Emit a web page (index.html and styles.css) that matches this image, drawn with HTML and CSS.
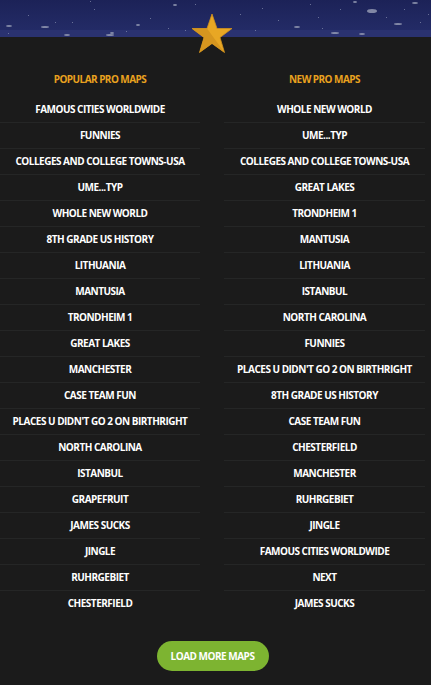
FILE: index.html
```html
<!DOCTYPE html>
<html lang="en">
<head>
    <meta charset="UTF-8">
    <meta name="viewport" content="width=device-width, initial-scale=1.0">
    <title>Pro Maps</title>
    <link rel="stylesheet" href="styles.css">
</head>
<body>
    <div class="page">
        <div class="banner">
            <svg class="sky" width="431" height="37" viewBox="0 0 431 37">
                <defs>
                    <linearGradient id="skyfill" x1="0" y1="0" x2="0" y2="1">
                        <stop offset="0" stop-color="#1c2257"/>
                        <stop offset="0.8" stop-color="#232b66"/>
                    </linearGradient>
                </defs>
                <rect width="431" height="37" fill="url(#skyfill)"/>
                <rect y="30" width="431" height="7" fill="#2a3270"/>
                <g fill="#9aa0b8" opacity="0.8">
                    <ellipse cx="9" cy="26" rx="3" ry="1"/>
                    <ellipse cx="45" cy="27" rx="4" ry="1"/>
                    <ellipse cx="67" cy="35" rx="3" ry="1"/>
                    <ellipse cx="110" cy="35" rx="4" ry="1"/>
                    <ellipse cx="112" cy="33" rx="2" ry="1"/>
                    <ellipse cx="138" cy="25" rx="2" ry="1"/>
                    <ellipse cx="175" cy="5" rx="2" ry="1"/>
                    <ellipse cx="297" cy="27" rx="3" ry="1"/>
                    <ellipse cx="335" cy="33" rx="4" ry="1"/>
                    <ellipse cx="372" cy="11" rx="5" ry="2"/>
                    <ellipse cx="398" cy="24" rx="4" ry="1"/>
                    <ellipse cx="362" cy="34" rx="3" ry="1"/>
                    <ellipse cx="415" cy="3" rx="3" ry="1"/>
                    <ellipse cx="355" cy="2" rx="2" ry="1"/>
                </g>
                <g fill="#8890b0" opacity="0.7">
                    <rect x="28" y="15" width="1" height="1"/>
                    <rect x="55" y="22" width="1" height="1"/>
                    <rect x="90" y="1" width="1" height="1"/>
                    <rect x="94" y="9" width="1" height="1"/>
                    <rect x="72" y="22" width="1" height="1"/>
                    <rect x="126" y="31" width="1" height="1"/>
                    <rect x="150" y="18" width="1" height="1"/>
                    <rect x="168" y="28" width="1" height="1"/>
                    <rect x="185" y="30" width="1" height="1"/>
                    <rect x="195" y="4" width="1" height="1"/>
                    <rect x="240" y="14" width="1" height="1"/>
                    <rect x="255" y="30" width="1" height="1"/>
                    <rect x="262" y="8" width="1" height="1"/>
                    <rect x="278" y="20" width="1" height="1"/>
                    <rect x="310" y="4" width="1" height="1"/>
                    <rect x="318" y="17" width="1" height="1"/>
                    <rect x="322" y="28" width="1" height="1"/>
                    <rect x="340" y="9" width="1" height="1"/>
                    <rect x="386" y="17" width="1" height="1"/>
                    <rect x="404" y="9" width="1" height="1"/>
                    <rect x="420" y="22" width="1" height="1"/>
                    <rect x="428" y="14" width="1" height="1"/>
                    <rect x="8" y="33" width="1" height="1"/>
                    <rect x="215" y="31" width="1" height="1"/>
                </g>
            </svg>
            <svg class="star" width="44" height="42" viewBox="0 0 44 42">
                <polygon points="22,1 27,15.5 42,15.5 30,24.5 34.5,39.5 22,30.5 9.5,39.5 14,24.5 2,15.5 17,15.5" fill="#e8a724" stroke="#d1911c" stroke-width="0.8" stroke-linejoin="round"/>
                <polygon points="17,15.5 34.5,39.5 22,30.5 9.5,39.5 14,24.5 2,15.5" fill="#d6961f"/>
            </svg>
        </div>

        <div class="lists">
            <div class="col">
                <h3>Popular Pro Maps</h3>
                <ul>
                    <li>Famous Cities Worldwide</li>
                    <li>Funnies</li>
                    <li>Colleges and College Towns-USA</li>
                    <li>Ume...typ</li>
                    <li>Whole New World</li>
                    <li>8th Grade US History</li>
                    <li>Lithuania</li>
                    <li>Mantusia</li>
                    <li>Trondheim 1</li>
                    <li>Great Lakes</li>
                    <li>Manchester</li>
                    <li>Case Team Fun</li>
                    <li>Places u didn't go 2 on birthright</li>
                    <li>North Carolina</li>
                    <li>Istanbul</li>
                    <li>Grapefruit</li>
                    <li>James Sucks</li>
                    <li>Jingle</li>
                    <li>Ruhrgebiet</li>
                    <li>Chesterfield</li>
                </ul>
            </div>
            <div class="col">
                <h3>New Pro Maps</h3>
                <ul>
                    <li>Whole New World</li>
                    <li>Ume...typ</li>
                    <li>Colleges and College Towns-USA</li>
                    <li>Great Lakes</li>
                    <li>Trondheim 1</li>
                    <li>Mantusia</li>
                    <li>Lithuania</li>
                    <li>Istanbul</li>
                    <li>North Carolina</li>
                    <li>Funnies</li>
                    <li>Places u didn't go 2 on birthright</li>
                    <li>8th Grade US History</li>
                    <li>Case Team Fun</li>
                    <li>Chesterfield</li>
                    <li>Manchester</li>
                    <li>Ruhrgebiet</li>
                    <li>Jingle</li>
                    <li>Famous Cities Worldwide</li>
                    <li>Next</li>
                    <li>James Sucks</li>
                </ul>
            </div>
        </div>

        <div class="more">
            <button>Load More Maps</button>
        </div>
    </div>
</body>
</html>
```

FILE: styles.css
```css
body {
    margin: 0;
    padding: 0;
    background-color: #1b1b1b;
    font-family: "Open Sans", "Liberation Sans", sans-serif;
    color: #ffffff;
}
.page {
    width: 425px;
}
/* Header strip with star */
.banner {
    position: relative;
    height: 37px;
}
.banner .sky {
    display: block;
}
.banner .star {
    position: absolute;
    left: 190px;
    top: 13px;
}
/* Two lists */
.lists {
    display: grid;
    grid-template-columns: 200px 201px;
    column-gap: 24px;
    margin-top: 35px;
}
.col h3 {
    margin: 0 0 11px;
    font-size: 10px;
    line-height: 14px;
    font-weight: 700;
    letter-spacing: -0.55px;
    text-transform: uppercase;
    text-align: center;
    color: #e9a21f;
}
.col ul {
    list-style: none;
    margin: 0;
    padding: 0;
}
.col li {
    height: 25px;
    line-height: 25px;
    font-size: 10px;
    font-weight: 700;
    letter-spacing: -0.5px;
    text-transform: uppercase;
    text-align: center;
    white-space: nowrap;
    border-bottom: 1px solid #252626;
}
.col li:last-child {
    border-bottom: none;
}
.more {
    display: flex;
    justify-content: center;
    margin-top: 25px;
}
.more button {
    width: 112px;
    height: 30px;
    border: none;
    border-radius: 15px;
    background-color: #7db431;
    color: #ffffff;
    font-family: "Open Sans", "Liberation Sans", sans-serif;
    font-size: 10px;
    font-weight: 700;
    letter-spacing: -0.5px;
    text-transform: uppercase;
    cursor: pointer;
}
.more button:hover {
    background-color: #6c9c29;
}
```
